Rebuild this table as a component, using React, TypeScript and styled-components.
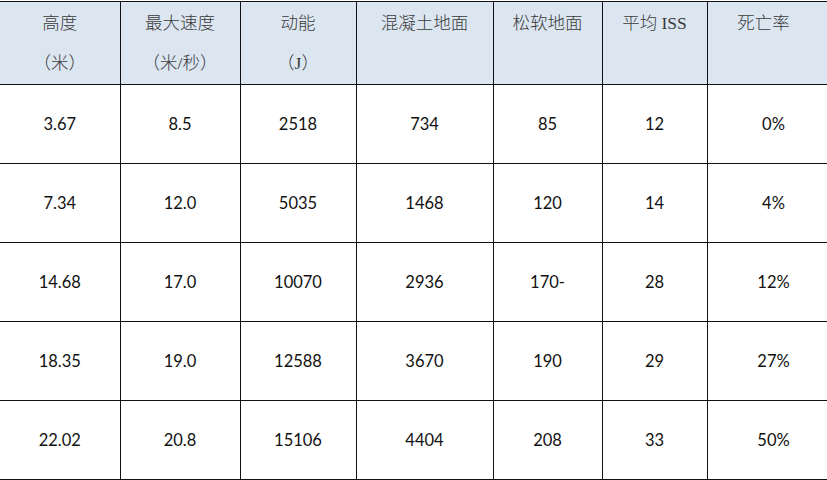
import React from "react";
import styled, { createGlobalStyle } from "styled-components";

const GlobalStyle = createGlobalStyle`
  html, body {
    margin: 0;
    padding: 0;
    background: #ffffff;
  }
`

const Page = styled.div`
  width: 827px;
  height: 480px;
  overflow: hidden;
  padding-top: 1px;
  box-sizing: border-box;
`

const Table = styled.table`
  border-collapse: collapse;
  table-layout: fixed;
  width: 840px;
`

const HeadRow = styled.tr`
  height: 83px;
  background: #dce6f1;
`

const BodyRow = styled.tr`
  height: 79px;
`

interface HeadCellProps {
  $shift: number
}

const HeadCell = styled.th<HeadCellProps>`
  border-top: 1px solid #111;
  border-bottom: 1px solid #111;
  border-right: 1px solid #111;
  padding: 10px ${({ $shift }) => $shift}px 0 0;
  vertical-align: top;
  text-align: center;
  font-family: "Liberation Serif", "Noto Sans CJK SC", serif;
  font-weight: 300;
  font-size: 17.5px;
  line-height: 40px;
  color: #3a3a3a;
`

const HeadLine = styled.div`
  height: 40px;
  margin-top: -9px;
  & + & {
    margin-top: 0;
  }
`

const Cell = styled.td`
  border-bottom: 1px solid #111;
  border-right: 1px solid #111;
  text-align: center;
  vertical-align: middle;
  font-family: Lato, "Liberation Sans", sans-serif;
  font-size: 16.5px;
  color: #111;
  padding: 0;
`

interface Column {
  width: number
  shift: number
  lines: string[]
}

const columns: Column[] = [
  { width: 120, shift: 0, lines: ["高度", "（米）"] },
  { width: 120, shift: 0, lines: ["最大速度", "（米/秒）"] },
  { width: 116, shift: 0, lines: ["动能", "（J）"] },
  { width: 137, shift: 0, lines: ["混凝土地面"] },
  { width: 109, shift: 0, lines: ["松软地面"] },
  { width: 105, shift: 0, lines: ["平均 ISS"] },
  { width: 133, shift: 20, lines: ["死亡率"] },
]

const rows: string[][] = [
  ["3.67", "8.5", "2518", "734", "85", "12", "0%"],
  ["7.34", "12.0", "5035", "1468", "120", "14", "4%"],
  ["14.68", "17.0", "10070", "2936", "170-", "28", "12%"],
  ["18.35", "19.0", "12588", "3670", "190", "29", "27%"],
  ["22.02", "20.8", "15106", "4404", "208", "33", "50%"],
]

export default function App() {
  return (
    <Page>
      <GlobalStyle />
      <Table>
        <colgroup>
          {columns.map((c, i) => (
            <col key={i} style={{ width: c.width }} />
          ))}
        </colgroup>
        <thead>
          <HeadRow>
            {columns.map((c, i) => (
              <HeadCell key={i} $shift={c.shift}>
                {c.lines.map((l) => (
                  <HeadLine key={l}>{l}</HeadLine>
                ))}
              </HeadCell>
            ))}
          </HeadRow>
        </thead>
        <tbody>
          {rows.map((r, i) => (
            <BodyRow key={i}>
              {r.map((v, j) => (
                <Cell key={j}>{v}</Cell>
              ))}
            </BodyRow>
          ))}
        </tbody>
      </Table>
    </Page>
  )
}
